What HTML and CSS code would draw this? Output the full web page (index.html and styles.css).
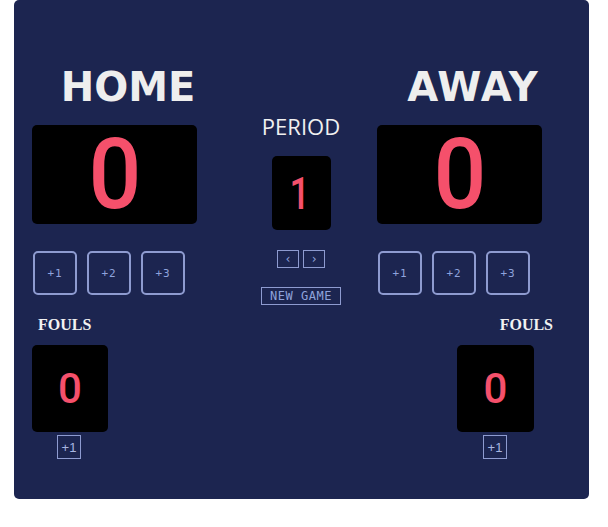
FILE: index.html
```html
<!DOCTYPE html>
<html lang="en">
<head>
<meta charset="utf-8">
<title>Scoreboard</title>
<link rel="stylesheet" href="styles.css">
</head>
<body>
<div class="board">
  <div class="main">
    <section class="team">
      <h2 class="team-name">HOME</h2>
      <div class="score-box"><span class="digit digit-big">0</span></div>
      <div class="pts">
        <button class="pt-btn">+1</button>
        <button class="pt-btn">+2</button>
        <button class="pt-btn">+3</button>
      </div>
    </section>
    <section class="center">
      <h3 class="period-label">PERIOD</h3>
      <div class="period-box"><span class="digit digit-period">1</span></div>
      <div class="arrows">
        <button class="arrow-btn">&lsaquo;</button>
        <button class="arrow-btn">&rsaquo;</button>
      </div>
      <button class="new-game">NEW GAME</button>
    </section>
    <section class="team team-away">
      <h2 class="team-name team-name-away">AWAY</h2>
      <div class="score-box"><span class="digit digit-big">0</span></div>
      <div class="pts">
        <button class="pt-btn">+1</button>
        <button class="pt-btn">+2</button>
        <button class="pt-btn">+3</button>
      </div>
    </section>
  </div>
  <div class="fouls-row">
    <div class="fouls">
      <h4 class="fouls-label">FOULS</h4>
      <div class="fouls-box"><span class="digit digit-fouls">0</span></div>
      <button class="foul-btn">+1</button>
    </div>
    <div class="fouls fouls-away">
      <h4 class="fouls-label">FOULS</h4>
      <div class="fouls-box"><span class="digit digit-fouls">0</span></div>
      <button class="foul-btn">+1</button>
    </div>
  </div>
</div>
</body>
</html>
```

FILE: styles.css
```css
* { box-sizing: border-box; }
html, body { margin: 0; padding: 0; background: #ffffff; }

.board {
  margin-left: 14px;
  width: 575px;
  height: 499px;
  background: #1c2550;
  border-radius: 5px;
  padding: 63px 36px 0 18px;
}

.main {
  display: flex;
  align-items: flex-start;
}

.team {
  width: 165px;
  display: flex;
  flex-direction: column;
}
.team-away { margin-left: 36px; }

.team-name {
  margin: 0;
  padding-left: 27px;
  text-align: center;
  font-family: "DejaVu Sans", Verdana, sans-serif;
  font-weight: bold;
  font-size: 40px;
  line-height: 48px;
  color: #eeeeee;
  white-space: nowrap;
}
.team-name-away { letter-spacing: 1px; }

.score-box {
  margin-top: 14px;
  height: 99px;
  background: #000;
  border-radius: 5px;
  display: flex;
  align-items: center;
  justify-content: center;
}

.digit {
  color: #f5506b;
  font-family: Roboto, "Liberation Sans", sans-serif;
  font-weight: 500;
  display: block;
}
.digit-big {
  font-size: 98px;
  line-height: 1;
  transform: scaleX(0.95);
}
.digit-period {
  font-size: 45px;
  line-height: 1;
  transform: scaleX(0.8);
}
.digit-fouls {
  font-size: 42px;
  line-height: 1;
}

.pts {
  margin-top: 27px;
  display: flex;
  gap: 10px;
  padding-left: 1px;
}
.pt-btn {
  width: 44px;
  height: 44px;
  padding: 0;
  background: transparent;
  border: 2px solid #8e9bd0;
  border-radius: 5px;
  color: #8fa3dc;
  font-family: "DejaVu Sans Mono", monospace;
  font-size: 11px;
  letter-spacing: 1px;
}

.center {
  width: 80px;
  margin-left: 64px;
  margin-top: 48px;
  display: flex;
  flex-direction: column;
  align-items: center;
}
.period-label {
  margin: 0;
  font-family: "Open Sans", sans-serif;
  font-weight: normal;
  font-size: 22px;
  line-height: 30px;
  color: #f0f0f0;
}
.period-box {
  margin-top: 15px;
  width: 59px;
  height: 74px;
  background: #000;
  border-radius: 5px;
  display: flex;
  align-items: center;
  justify-content: center;
  padding-right: 3px;
}
.arrows {
  margin-top: 20px;
  display: flex;
  gap: 4px;
}
.arrow-btn {
  width: 22px;
  height: 18px;
  padding: 0;
  background: transparent;
  border: 1px solid #8e9bd0;
  color: #8fa3dc;
  font-family: "DejaVu Sans Mono", monospace;
  font-size: 12px;
  line-height: 14px;
}
.new-game {
  margin-top: 19px;
  width: 80px;
  height: 18px;
  padding: 0;
  background: transparent;
  border: 1px solid #8e9bd0;
  color: #8fa3dc;
  font-family: "DejaVu Sans Mono", monospace;
  font-size: 12px;
  line-height: 14px;
  letter-spacing: 0.5px;
}

.fouls-row {
  margin-top: 10px;
  display: flex;
  justify-content: space-between;
}
.fouls {
  display: flex;
  flex-direction: column;
  width: 96px;
}
.fouls-label {
  margin: 0;
  padding-left: 6px;
  font-family: "Liberation Serif", "Times New Roman", serif;
  font-weight: bold;
  font-size: 16px;
  line-height: 20px;
  color: #f2f2f2;
}
.fouls-away .fouls-label {
  text-align: right;
  padding-left: 0;
}
.fouls-box {
  margin-top: 10px;
  width: 76px;
  height: 87px;
  background: #000;
  border-radius: 5px;
  display: flex;
  align-items: center;
  justify-content: center;
}
.fouls-away .fouls-box { width: 77px; }
.foul-btn {
  margin-top: 3px;
  margin-left: 25px;
  width: 24px;
  height: 24px;
  padding: 0;
  background: transparent;
  border: 1px solid #8e9bd0;
  color: #a9b6e0;
  font-family: "Liberation Sans", Arial, sans-serif;
  font-size: 13px;
}
.fouls-away .foul-btn { margin-left: 26px; }
```
